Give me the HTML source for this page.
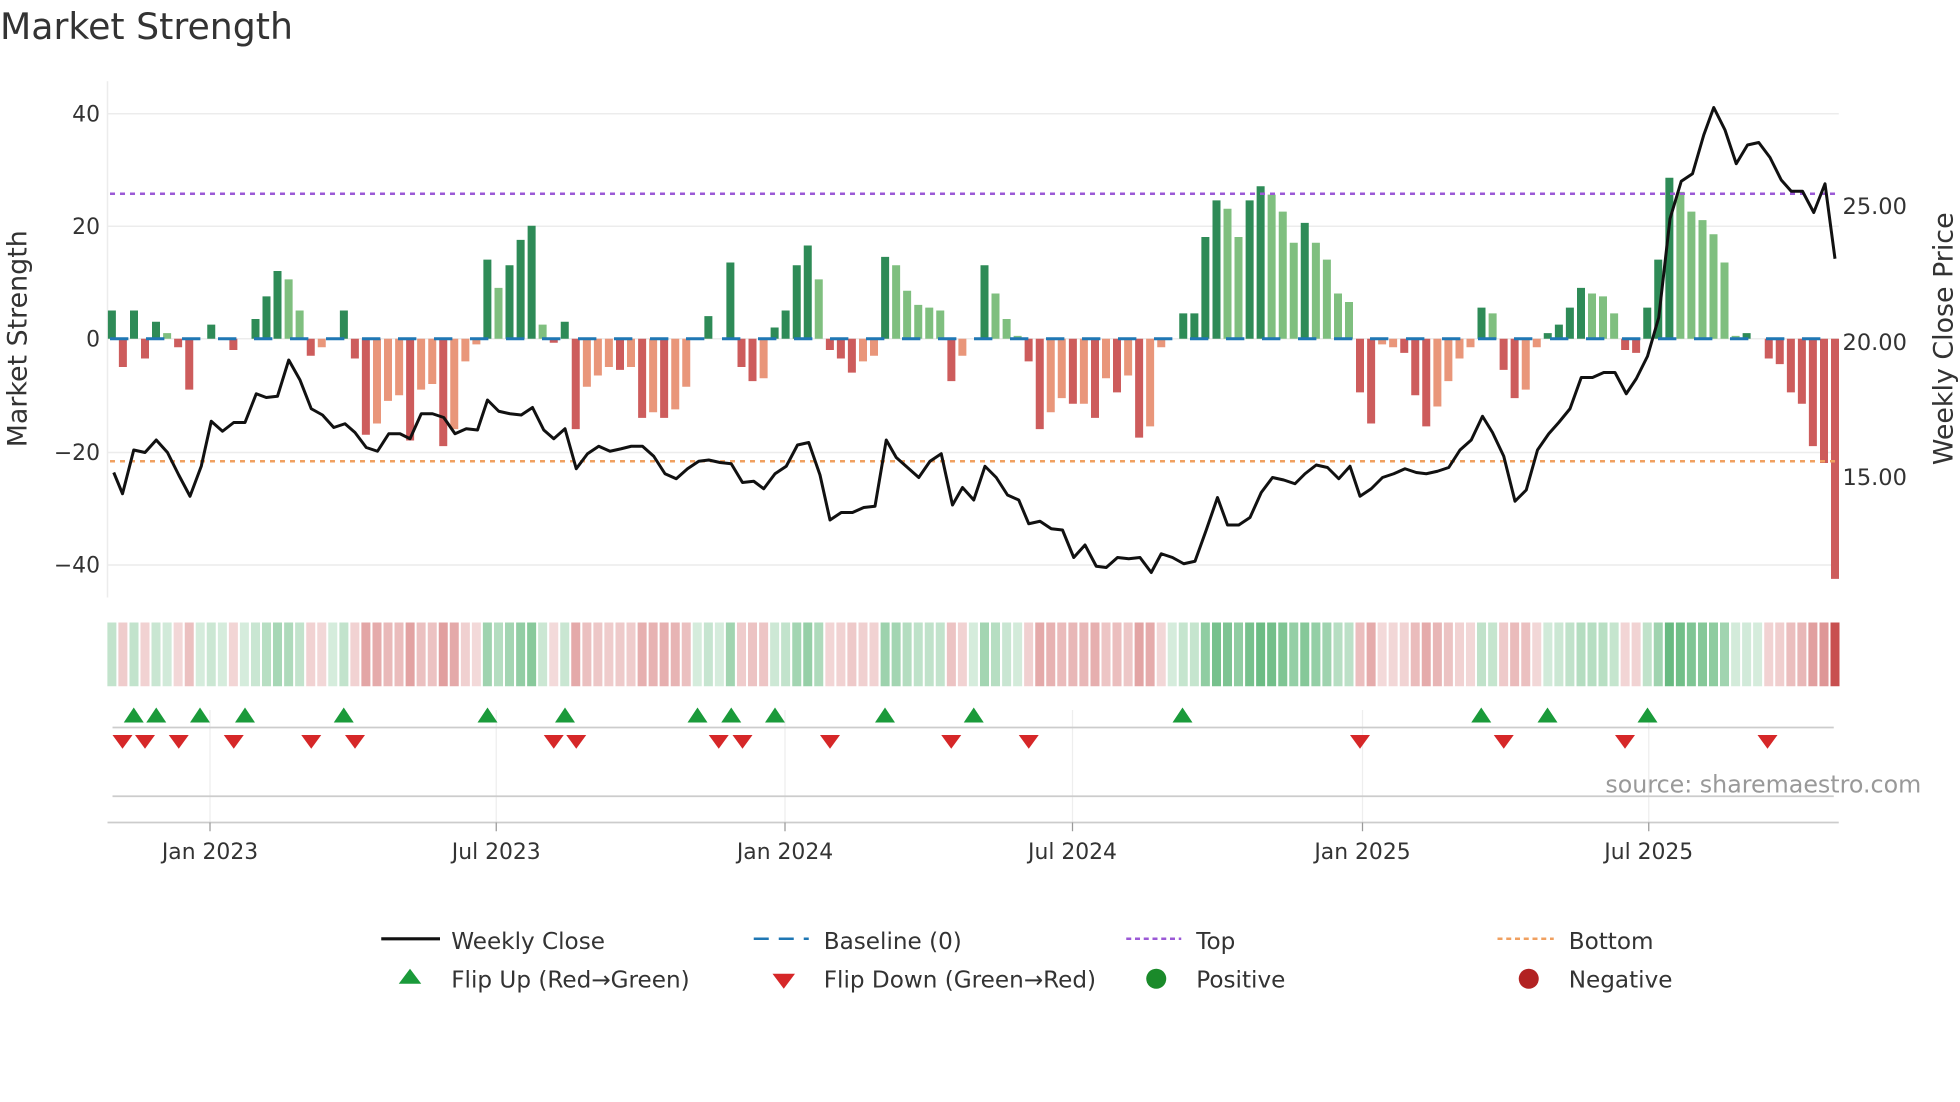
<!DOCTYPE html>
<html><head><meta charset="utf-8">
<style>html,body{margin:0;padding:0;background:#fff;overflow:hidden}svg{display:block}text{font-family:"DejaVu Sans","Liberation Sans",sans-serif}</style>
</head><body>
<svg id="s" width="1960" height="1102" viewBox="0 0 1568 881.6" xmlns="http://www.w3.org/2000/svg">
<text x="0" y="31" font-size="29" fill="#333">Market Strength</text>
<g stroke="#ececec" stroke-width="1.2">
<line x1="86" y1="91" x2="1471" y2="91"/><line x1="86" y1="181" x2="1471" y2="181"/><line x1="86" y1="271" x2="1471" y2="271"/><line x1="86" y1="362" x2="1471" y2="362"/><line x1="86" y1="452" x2="1471" y2="452"/>
<line x1="86" y1="65" x2="86" y2="478"/>
</g>
<g font-size="17.5" fill="#333" text-anchor="end">
<text x="80" y="97">40</text><text x="80" y="187">20</text><text x="80" y="277">0</text><text x="80" y="368">−20</text><text x="80" y="458">−40</text>
</g>
<g font-size="18" fill="#333">
<text x="1474" y="171">25.00</text><text x="1474" y="280">20.00</text><text x="1474" y="388">15.00</text>
</g>
<text transform="translate(21,271) rotate(-90)" font-size="21.5" fill="#333" text-anchor="middle">Market Strength</text>
<text transform="translate(1562,271) rotate(-90)" font-size="21.5" fill="#333" text-anchor="middle">Weekly Close Price</text>
<g id="bars"></g>
<line x1="88" y1="271" x2="1468" y2="271" stroke="#1f77b4" stroke-width="2.4" stroke-dasharray="14.7 14.1"/>
<line x1="88" y1="155" x2="1468" y2="155" stroke="#9b59d6" stroke-width="2" stroke-dasharray="4 4"/>
<line x1="88" y1="369" x2="1468" y2="369" stroke="#f0a060" stroke-width="2" stroke-dasharray="4 4"/>
<polyline id="price" fill="none" stroke="#111" stroke-width="2.4" stroke-linejoin="round"/>
<g id="strip"></g>
<g stroke="#eee" stroke-width="1"><line x1="168" y1="568" x2="168" y2="658"/><line x1="397" y1="568" x2="397" y2="658"/><line x1="628" y1="568" x2="628" y2="658"/><line x1="858" y1="568" x2="858" y2="658"/><line x1="1090" y1="568" x2="1090" y2="658"/><line x1="1319" y1="568" x2="1319" y2="658"/></g>
<line x1="90" y1="582" x2="1467" y2="582" stroke="#ccc" stroke-width="1.4"/>
<line x1="90" y1="637" x2="1467" y2="637" stroke="#ccc" stroke-width="1.4"/>
<line x1="86" y1="658" x2="1471" y2="658" stroke="#ccc" stroke-width="1.4"/>
<g stroke="#999" stroke-width="1"><line x1="168" y1="658" x2="168" y2="665"/><line x1="397" y1="658" x2="397" y2="665"/><line x1="628" y1="658" x2="628" y2="665"/><line x1="858" y1="658" x2="858" y2="665"/><line x1="1090" y1="658" x2="1090" y2="665"/><line x1="1319" y1="658" x2="1319" y2="665"/></g>
<g id="marks"></g>
<g font-size="17.5" fill="#333" text-anchor="middle">
<text x="168" y="687">Jan 2023</text><text x="397" y="687">Jul 2023</text><text x="628" y="687">Jan 2024</text><text x="858" y="687">Jul 2024</text><text x="1090" y="687">Jan 2025</text><text x="1319" y="687">Jul 2025</text>
</g>
<text x="1537" y="634" font-size="19" fill="#999" text-anchor="end">source: sharemaestro.com</text>
<g font-size="18.5" fill="#333">
<line x1="305" y1="751" x2="352" y2="751" stroke="#111" stroke-width="2.5"/><text x="361" y="759">Weekly Close</text>
<line x1="603" y1="751" x2="647" y2="751" stroke="#1f77b4" stroke-width="2" stroke-dasharray="12 8"/><text x="659" y="759">Baseline (0)</text>
<line x1="901" y1="751" x2="945" y2="751" stroke="#9b59d6" stroke-width="2" stroke-dasharray="4 3"/><text x="957" y="759">Top</text>
<line x1="1198" y1="751" x2="1243" y2="751" stroke="#f0a060" stroke-width="2" stroke-dasharray="4 3"/><text x="1255" y="759">Bottom</text>
<polygon points="319,787 337,787 328,775" fill="#1a9a3a"/><text x="361" y="790">Flip Up (Red→Green)</text>
<polygon points="618,779 636,779 627,791" fill="#d62728"/><text x="659" y="790">Flip Down (Green→Red)</text>
<circle cx="925" cy="783" r="8" fill="#1a8a2a"/><text x="957" y="790">Positive</text>
<circle cx="1223" cy="783" r="8" fill="#b22222"/><text x="1255" y="790">Negative</text>
</g>
</svg>
<script>
var V=[[5,'d'],[-5,'r'],[5,'d'],[-3.5,'r'],[3,'d'],[1,'l'],[-1.5,'r'],[-9,'r'],[0,'l'],[2.5,'d'],[0,'l'],[-2,'r'],[0,'l'],[3.5,'d'],[7.5,'d'],[12,'d'],[10.5,'l'],[5,'l'],[-3,'r'],[-1.5,'o'],[0,'l'],[5,'d'],[-3.5,'r'],[-17,'r'],[-15,'o'],[-11,'o'],[-10,'o'],[-18,'r'],[-9,'o'],[-8,'o'],[-19,'r'],[-16,'o'],[-4,'o'],[-1,'o'],[14,'d'],[9,'l'],[13,'d'],[17.5,'d'],[20,'d'],[2.5,'l'],[-0.7,'r'],[3,'d'],[-16,'r'],[-8.5,'o'],[-6.5,'o'],[-5,'o'],[-5.5,'r'],[-5,'o'],[-14,'r'],[-13,'o'],[-14,'r'],[-12.5,'o'],[-8.5,'o'],[0,'l'],[4,'d'],[0,'l'],[13.5,'d'],[-5,'r'],[-7.5,'r'],[-7,'o'],[2,'d'],[5,'d'],[13,'d'],[16.5,'d'],[10.5,'l'],[-2,'r'],[-3.5,'r'],[-6,'r'],[-4,'o'],[-3,'o'],[14.5,'d'],[13,'l'],[8.5,'l'],[6,'l'],[5.5,'l'],[5,'l'],[-7.5,'r'],[-3,'o'],[0,'l'],[13,'d'],[8,'l'],[3.5,'l'],[0.5,'l'],[-4,'r'],[-16,'r'],[-13,'o'],[-10.5,'o'],[-11.5,'r'],[-11.5,'o'],[-14,'r'],[-7,'o'],[-9.5,'r'],[-6.5,'o'],[-17.5,'r'],[-15.5,'o'],[-1.5,'o'],[0,'l'],[4.5,'d'],[4.5,'d'],[18,'d'],[24.5,'d'],[23,'l'],[18,'l'],[24.5,'d'],[27,'d'],[25.5,'l'],[22.5,'l'],[17,'l'],[20.5,'d'],[17,'l'],[14,'l'],[8,'l'],[6.5,'l'],[-9.5,'r'],[-15,'r'],[-1,'o'],[-1.5,'o'],[-2.5,'r'],[-10,'r'],[-15.5,'r'],[-12,'o'],[-7.5,'o'],[-3.5,'o'],[-1.5,'o'],[5.5,'d'],[4.5,'l'],[-5.5,'r'],[-10.5,'r'],[-9,'o'],[-1.5,'o'],[1,'d'],[2.5,'d'],[5.5,'d'],[9,'d'],[8,'l'],[7.5,'l'],[4.5,'l'],[-2,'r'],[-2.5,'r'],[5.5,'d'],[14,'d'],[28.5,'d'],[26,'l'],[22.5,'l'],[21,'l'],[18.5,'l'],[13.5,'l'],[0.5,'l'],[1,'d'],[0,'l'],[-3.5,'r'],[-4.5,'r'],[-9.5,'r'],[-11.5,'r'],[-19,'r'],[-22,'r'],[-42.5,'r']];
var C={d:'#2e8b57',l:'#7fbf7f',r:'#cd5c5c',o:'#e9967a'};
var n=V.length,x0=89.5,x1=1468,step=(x1-x0)/(n-1);
var b='',s='';
for(var i=0;i<n;i++){var v=V[i][0],x=x0+i*step,h=Math.abs(v)*4.52,y=v>=0?271-h:271;
if(h>0.3)b+='<rect x="'+(x-3.2).toFixed(1)+'" y="'+y.toFixed(1)+'" width="6.4" height="'+h.toFixed(1)+'" fill="'+C[V[i][1]]+'"/>';
var a=Math.min(1,0.2+Math.abs(v)/30*0.55);if(i==n-1)a=1;
var col=v>=0?'46,160,80':'200,80,80';
s+='<rect x="'+(x-3.6).toFixed(1)+'" y="498" width="7.2" height="51" fill="rgba('+col+','+a.toFixed(2)+')"/>';}
document.getElementById('bars').innerHTML=b;document.getElementById('strip').innerHTML=s;
var P=[[91,378],[98,395],[107,360],[116,362],[125,352],[134,362],[143,380],[152,397],[161,373],[169,337],[178,345],[187,338],[196,338],[205,315],[213,318],[222,317],[231,288],[240,304],[249,327],[258,332],[267,342],[276,339],[284,346],[293,358],[302,361],[311,347],[320,347],[328,351],[337,331],[346,331],[355,334],[364,347],[373,343],[382,344],[390,320],[399,329],[408,331],[417,332],[426,326],[435,344],[443,351],[452,343],[461,375],[470,363],[479,357],[488,361],[497,359],[505,357],[514,357],[523,365],[532,379],[541,383],[550,375],[559,369],[567,368],[576,370],[585,371],[594,386],[603,385],[611,391],[620,379],[629,373],[638,356],[647,354],[656,380],[664,416],[673,410],[682,410],[691,406],[700,405],[709,352],[717,366],[726,374],[735,382],[744,369],[753,363],[762,404],[770,390],[779,400],[788,373],[797,382],[806,396],[815,400],[823,419],[832,417],[841,423],[850,424],[859,446],[868,436],[877,453],[885,454],[894,446],[903,447],[912,446],[921,458],[929,443],[938,446],[947,451],[956,449],[965,424],[974,398],[982,420],[991,420],[1000,414],[1009,394],[1018,382],[1027,384],[1036,387],[1044,379],[1053,372],[1062,374],[1071,383],[1080,373],[1088,397],[1097,391],[1106,382],[1115,379],[1124,375],[1133,378],[1141,379],[1150,377],[1159,374],[1168,360],[1177,352],[1186,333],[1194,346],[1203,365],[1212,401],[1221,392],[1230,360],[1239,347],[1247,338],[1256,327],[1265,302],[1274,302],[1283,298],[1292,298],[1301,315],[1309,303],[1318,285],[1327,254],[1336,175],[1345,145],[1354,139],[1363,108],[1371,86],[1380,104],[1389,131],[1398,116],[1407,114],[1416,126],[1425,144],[1433,153],[1442,153],[1451,170],[1460,147],[1468,207]];
document.getElementById('price').setAttribute('points',P.map(function(p){return p.join(',')}).join(' '));
var U=[107,125,160,196,275,390,452,558,585,620,708,779,946,1185,1238,1318],D=[98,116,143,187,249,284,443,461,575,594,664,761,823,1088,1203,1300,1414],m='';
U.forEach(function(x){m+='<polygon points="'+(x-8)+',578 '+(x+8)+',578 '+x+',566" fill="#1a9a3a"/>'});
D.forEach(function(x){m+='<polygon points="'+(x-8)+',588 '+(x+8)+',588 '+x+',599" fill="#d62728"/>'});
document.getElementById('marks').innerHTML=m;
</script>
</body></html>
